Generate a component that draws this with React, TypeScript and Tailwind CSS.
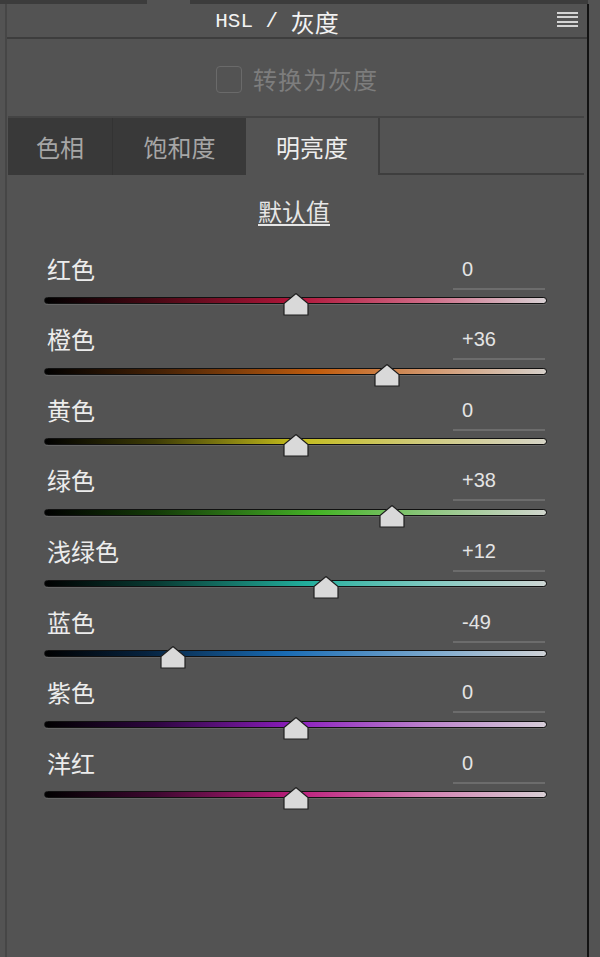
import React from 'react';

type Channel = {
  label: string;
  value: number;
  track: string;
};

const channels: Channel[] = [
  {
    label: '红色',
    value: 0,
    track: 'bg-[linear-gradient(to_right,#000_0%,#4a0814_22%,#b0163a_50%,#cf6a86_76%,#d8d0d3_100%)]'
  },
  {
    label: '橙色',
    value: 36,
    track: 'bg-[linear-gradient(to_right,#000_0%,#4a2406_24%,#c25e10_55%,#d39a72_78%,#d6d0ca_100%)]'
  },
  {
    label: '黄色',
    value: 0,
    track: 'bg-[linear-gradient(to_right,#000_0%,#3e3c06_22%,#c4bc1c_50%,#cfca7e_76%,#d6d4c6_100%)]'
  },
  {
    label: '绿色',
    value: 38,
    track: 'bg-[linear-gradient(to_right,#000_0%,#143a08_22%,#46b428_55%,#92c784_78%,#d0d5cd_100%)]'
  },
  {
    label: '浅绿色',
    value: 12,
    track: 'bg-[linear-gradient(to_right,#000_0%,#083a32_22%,#22ae9c_52%,#84cac2_78%,#ced6d4_100%)]'
  },
  {
    label: '蓝色',
    value: -49,
    track: 'bg-[linear-gradient(to_right,#000_0%,#06223e_20%,#1a6cb4_48%,#7eaace_78%,#cfd2d6_100%)]'
  },
  {
    label: '紫色',
    value: 0,
    track: 'bg-[linear-gradient(to_right,#000_0%,#2e0640_22%,#8c1ebe_50%,#bb82cc_76%,#d6cdd8_100%)]'
  },
  {
    label: '洋红',
    value: 0,
    track: 'bg-[linear-gradient(to_right,#000_0%,#3e0830_22%,#bc1e7c_50%,#d282b2_76%,#d8ced4_100%)]'
  }
];

const formatValue = (v: number) => (v > 0 ? `+${v}` : `${v}`);

const Thumb = () => (
  <svg width="26" height="23" viewBox="0 0 26 23">
    <polygon points="13,0.5 25,10.5 25,22 1,22 1,10.5" fill="#d9d9d9" stroke="#1e1e1e" strokeWidth="1.2" />
  </svg>
);

const SliderRow = ({ channel }: { channel: Channel }) => {
  // track is 504px wide, 0 sits in the middle
  const left = 252 + channel.value * 2.52 - 13;

  return (
    <div className="h-[70.6px] pl-[37px] pr-[40px]">
      <div className="h-[35px] flex justify-between items-start">
        <span className="mt-[2px] ml-[3px] text-[24px] leading-[24px] text-[#ececec]">{channel.label}</span>
        <div className="w-[92px] h-[35px] mr-[2px] border-b-2 border-[#6c6c6c] pl-[9px] pt-[2px]">
          <span className="font-['Liberation_Sans',sans-serif] text-[20px] leading-[20px] text-[#e4e4e4]">
            {formatValue(channel.value)}
          </span>
        </div>
      </div>
      <div className="relative mt-[7.5px] h-[7px]">
        <div
          className={`h-[7px] rounded-full border border-[#111] shadow-[0_1px_0_#656565] ${channel.track}`}
        />
        <div className="absolute top-[-4px]" style={{ left }}>
          <Thumb />
        </div>
      </div>
    </div>
  );
};

export default function App() {
  return (
    <div className="w-[600px] h-[957px] overflow-hidden bg-[#535353] font-['Noto_Sans_CJK_SC',sans-serif]">
      <div className="flex h-[4px]">
        <div className="w-[147px] bg-[#3c3c3c]" />
        <div className="w-[43px]" />
        <div className="w-[398px] bg-[#3c3c3c]" />
      </div>

      <div className="ml-[5px] w-[584px] h-[953px] border-l-2 border-l-[#464646] border-r-2 border-r-[#121212]">
        {/* header */}
        <div className="relative h-[35px] border-b-2 border-[#3d3d3d] flex justify-center items-center pr-[40px] pt-[2px] text-[#f2f2f2]">
          <span className="font-['Liberation_Mono',monospace] text-[21px] leading-[24px] whitespace-pre">HSL / </span>
          <span className="text-[24px] leading-[24px]">灰度</span>
          <div className="absolute right-[9px] top-[8px] flex flex-col gap-[2.4px]">
            <div className="w-[21px] h-[2px] bg-[#d4d4d4]" />
            <div className="w-[21px] h-[2px] bg-[#d4d4d4]" />
            <div className="w-[21px] h-[2px] bg-[#d4d4d4]" />
            <div className="w-[21px] h-[2px] bg-[#d4d4d4]" />
          </div>
        </div>

        {/* grayscale toggle */}
        <div className="h-[77px] flex justify-center items-center gap-[11px] pt-[3px]">
          <div className="w-[26px] h-[27px] rounded-[4px] border-[1.5px] border-[#6a6a6a]" />
          <span className="text-[24px] leading-[24px] text-[#7d7d7d] tracking-[1px]">转换为灰度</span>
        </div>

        {/* tabs */}
        <div className="ml-[1px] mr-[3px] h-[59px] flex border-t-2 border-[#444]">
          <div className="w-[105px] bg-[#393939] border-r border-[#333] flex justify-center items-center text-[24px] leading-[24px] text-[#a6a6a6]">
            色相
          </div>
          <div className="w-[133px] bg-[#393939] flex justify-center items-center text-[24px] leading-[24px] text-[#a6a6a6]">
            饱和度
          </div>
          <div className="w-[132px] flex justify-center items-center text-[24px] leading-[24px] text-[#ededed]">
            明亮度
          </div>
          <div className="flex-1 border-l-2 border-b-2 border-[#3e3e3e]" />
        </div>

        {/* defaults link */}
        <div className="h-[79.7px] pt-[24px] flex justify-center pr-[6px]">
          <span className="text-[24px] leading-[24px] text-[#e6e6e6] underline underline-offset-[3px] decoration-[1.5px]">
            默认值
          </span>
        </div>

        {channels.map((channel) => (
          <SliderRow key={channel.label} channel={channel} />
        ))}
      </div>
    </div>
  );
}
